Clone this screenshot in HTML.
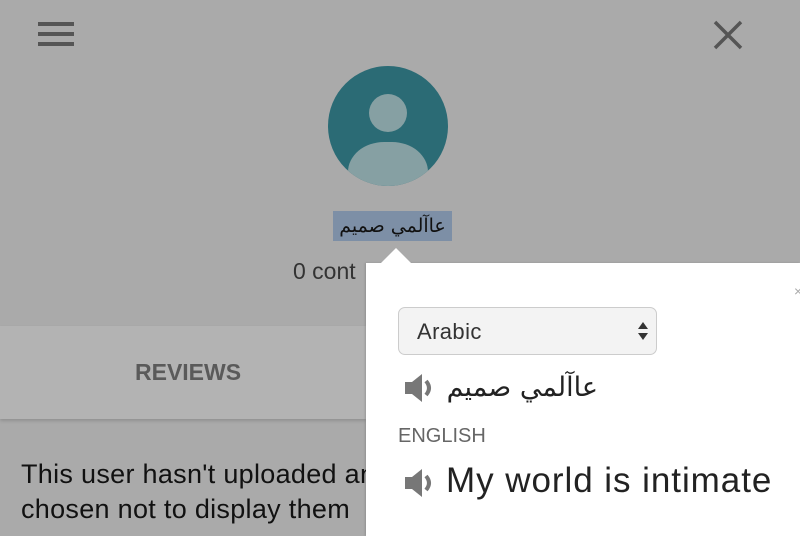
<!DOCTYPE html>
<html><head><meta charset="utf-8"><style>
body{margin:0;width:800px;height:536px;overflow:hidden;background:#aaaaaa;font-family:"Liberation Sans","Noto Sans CJK SC",sans-serif;position:relative}
.a{position:absolute;white-space:nowrap}
</style></head><body>
<div class="a" style="left:38px;top:22px;width:36px;height:4px;background:#555"></div>
<div class="a" style="left:38px;top:32px;width:36px;height:4px;background:#555"></div>
<div class="a" style="left:38px;top:42px;width:36px;height:4px;background:#555"></div>
<svg class="a" style="left:712px;top:20px" width="32" height="30"><path d="M3 2 L29 28 M29 2 L3 28" stroke="#555" stroke-width="3.5"/></svg>
<svg class="a" style="left:328px;top:66px" width="120" height="120"><defs><clipPath id="c"><circle cx="60" cy="60" r="60"/></clipPath></defs><circle cx="60" cy="60" r="60" fill="#2b6b75"/><g clip-path="url(#c)" fill="#86a0a3"><circle cx="60" cy="47" r="19"/><rect x="20" y="76" width="80" height="60" rx="36"/></g></svg>
<div class="a" style="left:333px;top:211px;width:119px;height:30px;background:#7d8fa6"></div>
<div class="a" style="left:333px;top:211px;width:119px;height:30px;font-size:19px;line-height:30px;text-align:center;color:#111;direction:rtl;font-family:'DejaVu Sans',sans-serif">عاآلمي صميم</div>
<div class="a" style="left:293px;top:258px;font-size:23px;color:#333">0 cont</div>
<div class="a" style="left:0;top:326px;width:366px;height:93px;background:#b3b3b3;box-shadow:0 2px 3px rgba(0,0,0,.15)"></div>
<div class="a" style="left:135px;top:359px;font-size:23px;font-weight:bold;color:#5a5a5a">REVIEWS</div>
<div class="a" style="left:21px;top:457px;font-size:27px;line-height:35px;color:#111;width:345px;overflow:hidden;letter-spacing:0.3px">This user hasn't uploaded any<br>chosen not to display them</div>
<div class="a" style="left:366px;top:263px;width:434px;height:273px;background:#fff;box-shadow:-1px 0 2px rgba(0,0,0,.15)"></div>
<div class="a" style="left:381px;top:248px;width:0;height:0;border-left:15px solid transparent;border-right:15px solid transparent;border-bottom:15px solid #fff"></div>
<div class="a" style="left:794px;top:283px;font-size:14px;color:#aaa">×</div>
<div class="a" style="left:398px;top:307px;width:259px;height:48px;border:1px solid #ccc;border-radius:7px;background:#f3f3f3;box-sizing:border-box"></div>
<div class="a" style="left:417px;top:319px;font-size:22px;color:#333;letter-spacing:0.4px">Arabic</div>
<svg class="a" style="left:637px;top:320px" width="12" height="22"><path d="M1 9 L6 2 L11 9Z M1 13 L6 20 L11 13Z" fill="#333"/></svg>
<svg class="a" style="left:403px;top:372px" width="32" height="32"><path d="M2 10 H9 L19 2 V30 L9 22 H2Z" fill="#777"/><path d="M23 9 Q29 16 23 23" stroke="#777" stroke-width="4" fill="none"/></svg>
<div class="a" style="left:443px;top:372px;font-size:27px;color:#222;direction:rtl;font-family:'DejaVu Sans',sans-serif;width:155px;text-align:right">عاآلمي صميم</div>
<div class="a" style="left:398px;top:425px;font-size:20px;color:#666">ENGLISH</div>
<svg class="a" style="left:403px;top:467px" width="32" height="32"><path d="M2 10 H9 L19 2 V30 L9 22 H2Z" fill="#777"/><path d="M23 9 Q29 16 23 23" stroke="#777" stroke-width="4" fill="none"/></svg>
<div class="a" style="left:446px;top:461px;font-size:35px;color:#222;letter-spacing:0.95px">My world is intimate</div>
</body></html>
